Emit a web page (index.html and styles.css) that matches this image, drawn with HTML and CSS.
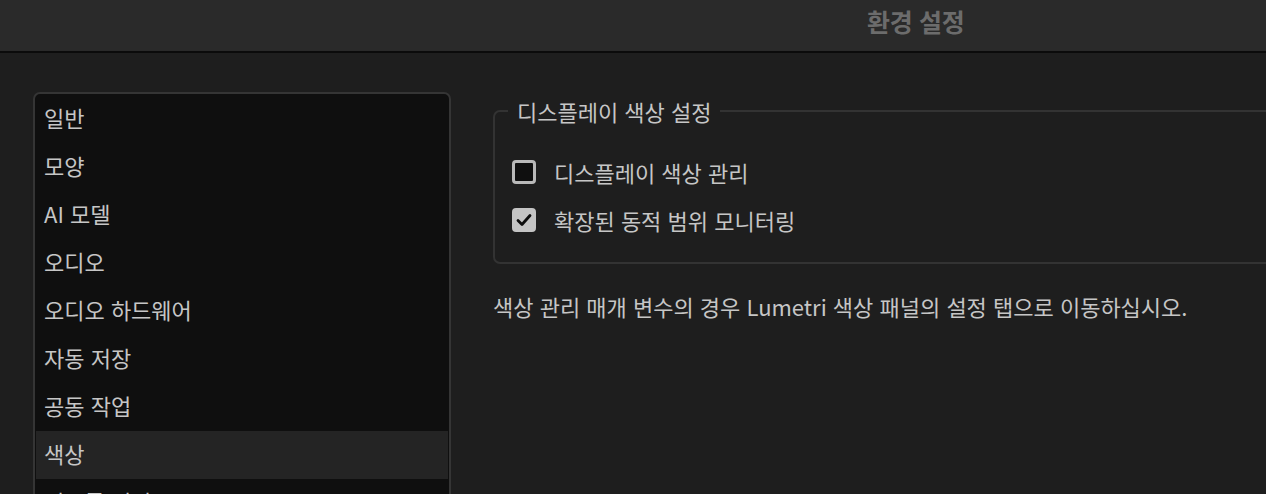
FILE: index.html
```html
<!DOCTYPE html>
<html lang="ko">
<head>
<meta charset="utf-8">
<title>환경 설정</title>
<link rel="stylesheet" href="styles.css">
</head>
<body>
<header class="titlebar"><span class="title">환경 설정</span></header>
<main class="main">
  <ul class="nav">
    <li class="nav-item">일반</li>
    <li class="nav-item">모양</li>
    <li class="nav-item">AI 모델</li>
    <li class="nav-item">오디오</li>
    <li class="nav-item">오디오 하드웨어</li>
    <li class="nav-item">자동 저장</li>
    <li class="nav-item">공동 작업</li>
    <li class="nav-item selected">색상</li>
    <li class="nav-item">컨트롤 서피스</li>
  </ul>
  <section class="content">
    <fieldset class="group">
      <legend class="legend">디스플레이 색상 설정</legend>
      <div class="row"><span class="box"></span><span class="label">디스플레이 색상 관리</span></div>
      <div class="row"><span class="box checked"><svg width="16" height="14" viewBox="0 0 16 14"><path d="M2 7.5 L6 11.5 L14 2.5" fill="none" stroke="#0c0c0c" stroke-width="2.8" stroke-linecap="round" stroke-linejoin="round"/></svg></span><span class="label">확장된 동적 범위 모니터링</span></div>
    </fieldset>
    <p class="note">색상 관리 매개 변수의 경우 Lumetri 색상 패널의 설정 탭으로 이동하십시오.</p>
  </section>
</main>
</body>
</html>
```
FILE: styles.css
```css
* { box-sizing: border-box; }
html, body { margin: 0; padding: 0; }
body {
  width: 1266px;
  height: 494px;
  overflow: hidden;
  background: #1e1e1e;
  font-family: "Noto Sans CJK KR", "Noto Sans", sans-serif;
  color: #c6c6c6;
}
.titlebar {
  height: 53px;
  background: #2a2a2a;
  border-bottom: 2px solid #0b0b0b;
  display: flex;
  align-items: center;
  padding-left: 867px;
  padding-bottom: 10px;
}
.title {
  font-size: 25px;
  line-height: 30px;
  font-weight: 700;
  color: #6c6c6c;
  letter-spacing: -0.3px;
}
.main {
  display: flex;
  gap: 42px;
  padding: 39px 0 0 33px;
}
.nav {
  list-style: none;
  margin: 0;
  padding: 1px;
  width: 418px;
  height: 420px;
  flex: none;
  background: #0f0f0f;
  border: 2px solid #353535;
  border-radius: 7px;
  overflow: hidden;
}
.nav-item {
  height: 48px;
  display: flex;
  align-items: center;
  padding-left: 8px;
  padding-bottom: 4px;
  font-size: 22px;
  color: #c6c6c6;
}
.nav-item.selected { background: #242424; }
.content {
  flex: none;
  width: 900px;
}
.group {
  margin: 0;
  margin-top: 4px;
  padding: 22px 0 18px 17px;
  border: 2px solid #333333;
  border-radius: 7px;
}
.legend {
  margin-left: -4px;
  padding: 0 9px;
  font-size: 22px;
  line-height: 30px;
  color: #c6c6c6;
}
.row {
  height: 48px;
  display: flex;
  align-items: center;
  gap: 18px;
}
.box {
  width: 24px;
  height: 24px;
  border-radius: 4px;
  border: 3px solid #b9b9b9;
  background: #0f0f0f;
  display: flex;
  align-items: center;
  justify-content: center;
}
.box.checked { background: #c4c4c4; border-color: #c4c4c4; }
.label { font-size: 22px; line-height: 30px; color: #c6c6c6; }
.note {
  margin: 27px 0 0 0;
  font-size: 22px;
  line-height: 30px;
  color: #c6c6c6;
}
```
